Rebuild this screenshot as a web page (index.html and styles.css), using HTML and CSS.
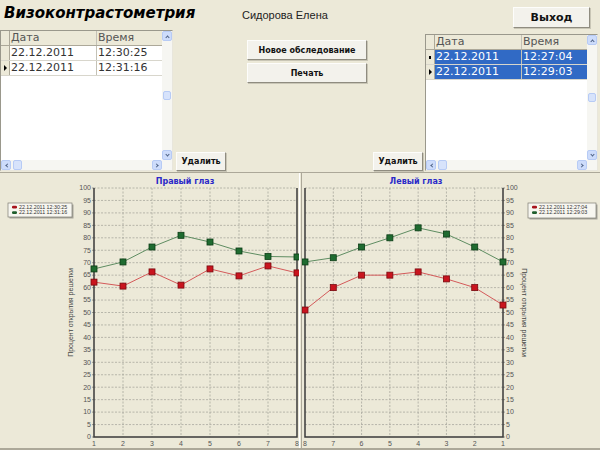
FILE: index.html
```html
<!DOCTYPE html>
<html lang="ru">
<head>
    <meta charset="UTF-8">
    <title>Визоконтрастометрия</title>
    <link rel="stylesheet" href="styles.css">
</head>
<body>
    <div class="top">
        <div class="col-left">
            <h1 class="title">Визоконтрастометрия</h1>
            <div class="grid grid-left">
                <div class="grid-body">
                    <div class="grid-row grid-head">
                        <div class="ind"></div>
                        <div class="cell date">Дата</div>
                        <div class="cell time">Время</div>
                    </div>
                    <div class="grid-row">
                        <div class="ind"></div>
                        <div class="cell date">22.12.2011</div>
                        <div class="cell time">12:30:25</div>
                    </div>
                    <div class="grid-row">
                        <div class="ind"><span class="arrow"></span></div>
                        <div class="cell date">22.12.2011</div>
                        <div class="cell time">12:31:16</div>
                    </div>
                </div>
                <div class="vscroll">
                    <div class="sbtn up"></div>
                    <div class="sthumb"></div>
                    <div class="sbtn down"></div>
                </div>
                <div class="hscroll">
                    <div class="sbtn left"></div>
                    <div class="sthumb"></div>
                    <div class="spacer"></div>
                    <div class="sbtn right"></div>
                </div>
                <div class="corner"></div>
            </div>
        </div>

        <div class="col-mid">
            <div class="patient">Сидорова Елена</div>
            <div class="actions">
                <button class="btn btn-wide">Новое обследование</button>
                <button class="btn btn-wide">Печать</button>
            </div>
            <div class="deletes">
                <button class="btn btn-del">Удалить</button>
                <button class="btn btn-del">Удалить</button>
            </div>
        </div>

        <div class="col-right">
            <button class="btn btn-exit">Выход</button>
            <div class="grid grid-right">
                <div class="grid-body">
                    <div class="grid-row grid-head">
                        <div class="ind"></div>
                        <div class="cell date">Дата</div>
                        <div class="cell time">Время</div>
                    </div>
                    <div class="grid-row selected">
                        <div class="ind"><span class="dot"></span></div>
                        <div class="cell date">22.12.2011</div>
                        <div class="cell time">12:27:04</div>
                    </div>
                    <div class="grid-row selected">
                        <div class="ind"><span class="arrow"></span></div>
                        <div class="cell date">22.12.2011</div>
                        <div class="cell time">12:29:03</div>
                    </div>
                </div>
                <div class="vscroll">
                    <div class="sbtn up"></div>
                    <div class="sthumb"></div>
                    <div class="sbtn down"></div>
                </div>
                <div class="hscroll">
                    <div class="sbtn left"></div>
                    <div class="sthumb"></div>
                    <div class="spacer"></div>
                    <div class="sbtn right"></div>
                </div>
                <div class="corner"></div>
            </div>
        </div>
    </div>

    <div class="charts">
        <svg class="chart" id="chartRightEye" width="299" height="275"></svg>
        <div class="split"></div>
        <svg class="chart" id="chartLeftEye" width="298" height="275"></svg>
    </div>

    <script>
        const NS = 'http://www.w3.org/2000/svg';

        function add(parent, tag, attrs, text) {
            const node = document.createElementNS(NS, tag);
            for (const key in attrs) node.setAttribute(key, attrs[key]);
            if (text !== undefined) node.textContent = text;
            parent.appendChild(node);
            return node;
        }

        function drawChart(svg, c) {
            const step = (c.right - c.left) / 7;
            const xAt = i => c.reversed ? c.right - (i - 1) * step : c.left + (i - 1) * step;
            const yAt = v => c.bottom - v * (c.bottom - c.top) / 100;

            add(svg, 'text', { x: c.titleX, y: 11, 'class': 'chart-title', 'text-anchor': 'middle' }, c.title);

            // grid + y labels
            for (let v = 0; v <= 100; v += 5) {
                const y = yAt(v);
                if (v > 0) add(svg, 'line', { x1: c.left, x2: c.right, y1: y, y2: y, 'class': 'grid-line' });
                const axisX = c.reversed ? c.right : c.left;
                const dir = c.reversed ? 1 : -1;
                add(svg, 'line', { x1: axisX, x2: axisX + dir * 2, y1: y, y2: y, 'class': 'tick-mark' });
                add(svg, 'text', {
                    x: axisX + dir * 3,
                    y: y + 2.3,
                    'class': 'tick',
                    'text-anchor': c.reversed ? 'start' : 'end'
                }, v);
            }

            // x labels
            for (let i = 1; i <= 8; i++) {
                const x = xAt(i);
                if (i > 1 && i < 8) add(svg, 'line', { x1: x, x2: x, y1: c.top, y2: c.bottom, 'class': 'grid-line' });
                add(svg, 'text', { x: x, y: 273, 'class': 'tick', 'text-anchor': 'middle' }, i);
            }

            // frame
            add(svg, 'path', {
                d: `M${c.left},${c.top} V${c.bottom} H${c.right} V${c.top}`,
                'class': 'axis'
            });

            // series
            c.series.forEach(s => {
                const pts = s.values.map((v, k) => [xAt(k + 1), yAt(v)]);
                add(svg, 'polyline', { points: pts.map(p => p.join(',')).join(' '), 'class': 'line ' + s.cls });
                pts.forEach(p => add(svg, 'rect', {
                    x: p[0] - 3, y: p[1] - 3, width: 6, height: 6, 'class': 'marker ' + s.cls
                }));
            });

            // axis title
            const midY = (c.top + c.bottom) / 2;
            add(svg, 'text', {
                x: 0, y: 0,
                'class': 'axis-title',
                'text-anchor': 'middle',
                transform: `translate(${c.axisTitleX},${midY}) rotate(${c.reversed ? 90 : -90})`
            }, 'Процент открытия решетки');

            // legend
            const lg = c.legend;
            add(svg, 'rect', { x: lg.x + 1.5, y: lg.y + 1.5, width: lg.w, height: lg.h, 'class': 'legend-shadow' });
            add(svg, 'rect', { x: lg.x, y: lg.y, width: lg.w, height: lg.h, 'class': 'legend-box' });
            c.series.forEach((s, k) => {
                const y = lg.y + 4 + k * 5.5;
                add(svg, 'rect', { x: lg.x + 4, y: y - 1.3, width: 5, height: 2.8, rx: 1.2, 'class': 'legend-mark ' + s.cls });
                add(svg, 'text', { x: lg.x + 11, y: y + 1.8, 'class': 'legend-text' }, s.label);
            });
        }

        drawChart(document.getElementById('chartRightEye'), {
            title: 'Правый глаз',
            titleX: 185,
            left: 94, right: 297, top: 15, bottom: 264,
            reversed: false,
            axisTitleX: 73,
            legend: { x: 8, y: 30, w: 64, h: 14 },
            series: [
                { label: '22.12.2011 12:30:25', cls: 'red', values: [62.2, 60.6, 66.3, 61, 67.5, 64.7, 68.7, 65.9] },
                { label: '22.12.2011 12:31:16', cls: 'green', values: [67.5, 70.3, 76.3, 81, 78.3, 74.7, 72.5, 72.3] }
            ]
        });

        drawChart(document.getElementById('chartLeftEye'), {
            title: 'Левый глаз',
            titleX: 114,
            left: 3, right: 201, top: 15, bottom: 264,
            reversed: true,
            axisTitleX: 220,
            legend: { x: 226, y: 30, w: 68, h: 15 },
            series: [
                { label: '22.12.2011 12:27:04', cls: 'red', values: [53, 60, 63.5, 66.3, 65, 65, 60, 51] },
                { label: '22.12.2011 12:29:03', cls: 'green', values: [70.3, 76.3, 81.5, 84, 80, 76.3, 72, 70.3] }
            ]
        });
    </script>
</body>
</html>
```

FILE: styles.css
```css
/* Main layout */
body {
    margin: 0;
    width: 600px;
    height: 450px;
    overflow: hidden;
    background-color: #ece9d8;
    font-family: 'DejaVu Sans', Verdana, sans-serif;
    color: #222;
}

.top {
    display: flex;
    height: 172px;
}

.col-left {
    width: 176px;
}

.title {
    margin: 0;
    height: 30px;
    padding: 3px 0 0 4px;
    box-sizing: border-box;
    font-size: 15px;
    line-height: 20px;
    font-weight: bold;
    font-style: italic;
    color: #000;
}

.col-mid {
    width: 249px;
    display: flex;
    flex-direction: column;
}

.patient {
    margin: 9px 0 0 66px;
    font-family: 'Liberation Sans', Arial, sans-serif;
    font-size: 11px;
    line-height: 13px;
    color: #222;
}

.actions {
    display: flex;
    flex-direction: column;
    gap: 3px;
    margin: 18px 0 0 71px;
}

.deletes {
    margin-top: auto;
    margin-right: 2px;
    margin-bottom: 1px;
    display: flex;
    justify-content: space-between;
}

.col-right {
    width: 175px;
}

/* Buttons */
.btn {
    display: block;
    padding: 0;
    background-color: #f3f2ec;
    border: 1px solid;
    border-color: #fdfdfb #8f8c80 #8f8c80 #fdfdfb;
    box-shadow: 1px 1px 0 #c9c6b6;
    font-family: 'DejaVu Sans', Verdana, sans-serif;
    font-weight: bold;
    color: #111;
    cursor: pointer;
}

.btn-wide {
    width: 120px;
    height: 20px;
    font-size: 8px;
}

.btn-del {
    width: 50px;
    height: 19px;
    font-size: 8px;
}

.btn-exit {
    width: 77px;
    height: 21px;
    margin: 7px 0 0 88px;
    font-size: 11px;
}

/* Data grids */
.grid {
    width: 173px;
    box-sizing: border-box;
    border: 1px solid #9a988c;
    border-right-color: #e8e6dc;
    border-bottom-color: #e8e6dc;
    background: #fff;
    display: grid;
    grid-template-columns: 1fr 10px;
    grid-template-rows: 1fr 10px;
}

.grid-left {
    height: 141px;
}

.grid-right {
    height: 137px;
    margin-top: 6px;
}

.grid-body {
    overflow: hidden;
}

.grid-row {
    display: flex;
    height: 14px;
    border-bottom: 1px solid #d8d6cc;
    font-size: 11px;
    line-height: 14px;
    color: #333;
}

.grid-head {
    background: #ece9d8;
    border-bottom-color: #aca899;
    color: #555;
}

.ind {
    width: 8px;
    flex: none;
    border-right: 1px solid #aca899;
    background: #ece9d8;
    display: flex;
    align-items: center;
    justify-content: center;
}

.cell {
    padding-left: 1px;
    white-space: nowrap;
}

.date {
    width: 85px;
    flex: none;
    border-right: 1px solid #c4c2b6;
}

.time {
    flex: 1;
}

.selected .cell {
    background: #316ac5;
    color: #fff;
}

.arrow {
    width: 0;
    height: 0;
    border-top: 3px solid transparent;
    border-bottom: 3px solid transparent;
    border-left: 3px solid #000;
}

.dot {
    width: 2px;
    height: 3px;
    background: #000;
}

/* Scrollbars */
.vscroll,
.hscroll {
    display: flex;
    background: #f6f6f2;
}

.vscroll {
    flex-direction: column;
    justify-content: space-between;
}

.spacer {
    flex: 1;
}

.corner {
    background: #f6f6f2;
}

.sbtn,
.sthumb {
    width: 10px;
    height: 10px;
    box-sizing: border-box;
    border: 1px solid #b7cbf5;
    border-radius: 2px;
    background: #cddcfb;
    display: flex;
    align-items: center;
    justify-content: center;
    flex: none;
}

.sthumb {
    width: 8px;
    height: 9px;
    margin: 0 auto;
    background: #d7e3fb;
}

.hscroll .sthumb {
    width: 9px;
    height: 10px;
    margin: 0 0 0 2px;
}

.sbtn::after {
    content: '';
    width: 2px;
    height: 2px;
    border-left: 1.5px solid #4d6185;
    border-top: 1.5px solid #4d6185;
}

.up::after {
    transform: translateY(1px) rotate(45deg);
}

.down::after {
    transform: translateY(-1px) rotate(225deg);
}

.left::after {
    transform: translateX(1px) rotate(-45deg);
}

.right::after {
    transform: translateX(-1px) rotate(135deg);
}

/* Charts */
.charts {
    display: flex;
    height: 275px;
    border-top: 1px solid #aca899;
    border-bottom: 2px solid #aca899;
}

.chart {
    display: block;
    overflow: hidden;
}

.split {
    width: 3px;
    box-sizing: border-box;
    border-left: 1px solid #fff;
    border-right: 1px solid #aca899;
}

.chart-title {
    font-family: 'DejaVu Sans', Verdana, sans-serif;
    font-size: 8px;
    font-weight: bold;
    fill: #2a2ac8;
}

.grid-line {
    stroke: #a9a89e;
    stroke-width: 0.8;
    stroke-dasharray: 2 1.5;
}

.tick-mark {
    stroke: #777;
    stroke-width: 0.7;
}

.axis {
    fill: none;
    stroke: #3a3a3a;
    stroke-width: 1.5;
}

.tick {
    font-family: 'Liberation Sans', Arial, sans-serif;
    font-size: 7px;
    fill: #555;
}

.axis-title {
    font-family: 'Liberation Sans', Arial, sans-serif;
    font-size: 7px;
    fill: #444;
}

.line {
    fill: none;
    stroke-width: 1;
}

.line.red {
    stroke: #d45a5a;
}

.line.green {
    stroke: #5f8d62;
}

.marker {
    stroke-width: 0.8;
}

.marker.red {
    fill: #c9141e;
    stroke: #780a10;
}

.marker.green {
    fill: #1f6b30;
    stroke: #0c3c16;
}

.legend-box {
    fill: #f7f6f0;
    stroke: #7d7b72;
    stroke-width: 0.7;
}

.legend-shadow {
    fill: #a8a69c;
}

.legend-mark.red {
    fill: #a8141c;
}

.legend-mark.green {
    fill: #1f5e2c;
}

.legend-text {
    font-family: 'Liberation Sans', Arial, sans-serif;
    font-size: 5.3px;
    fill: #333;
}
```
